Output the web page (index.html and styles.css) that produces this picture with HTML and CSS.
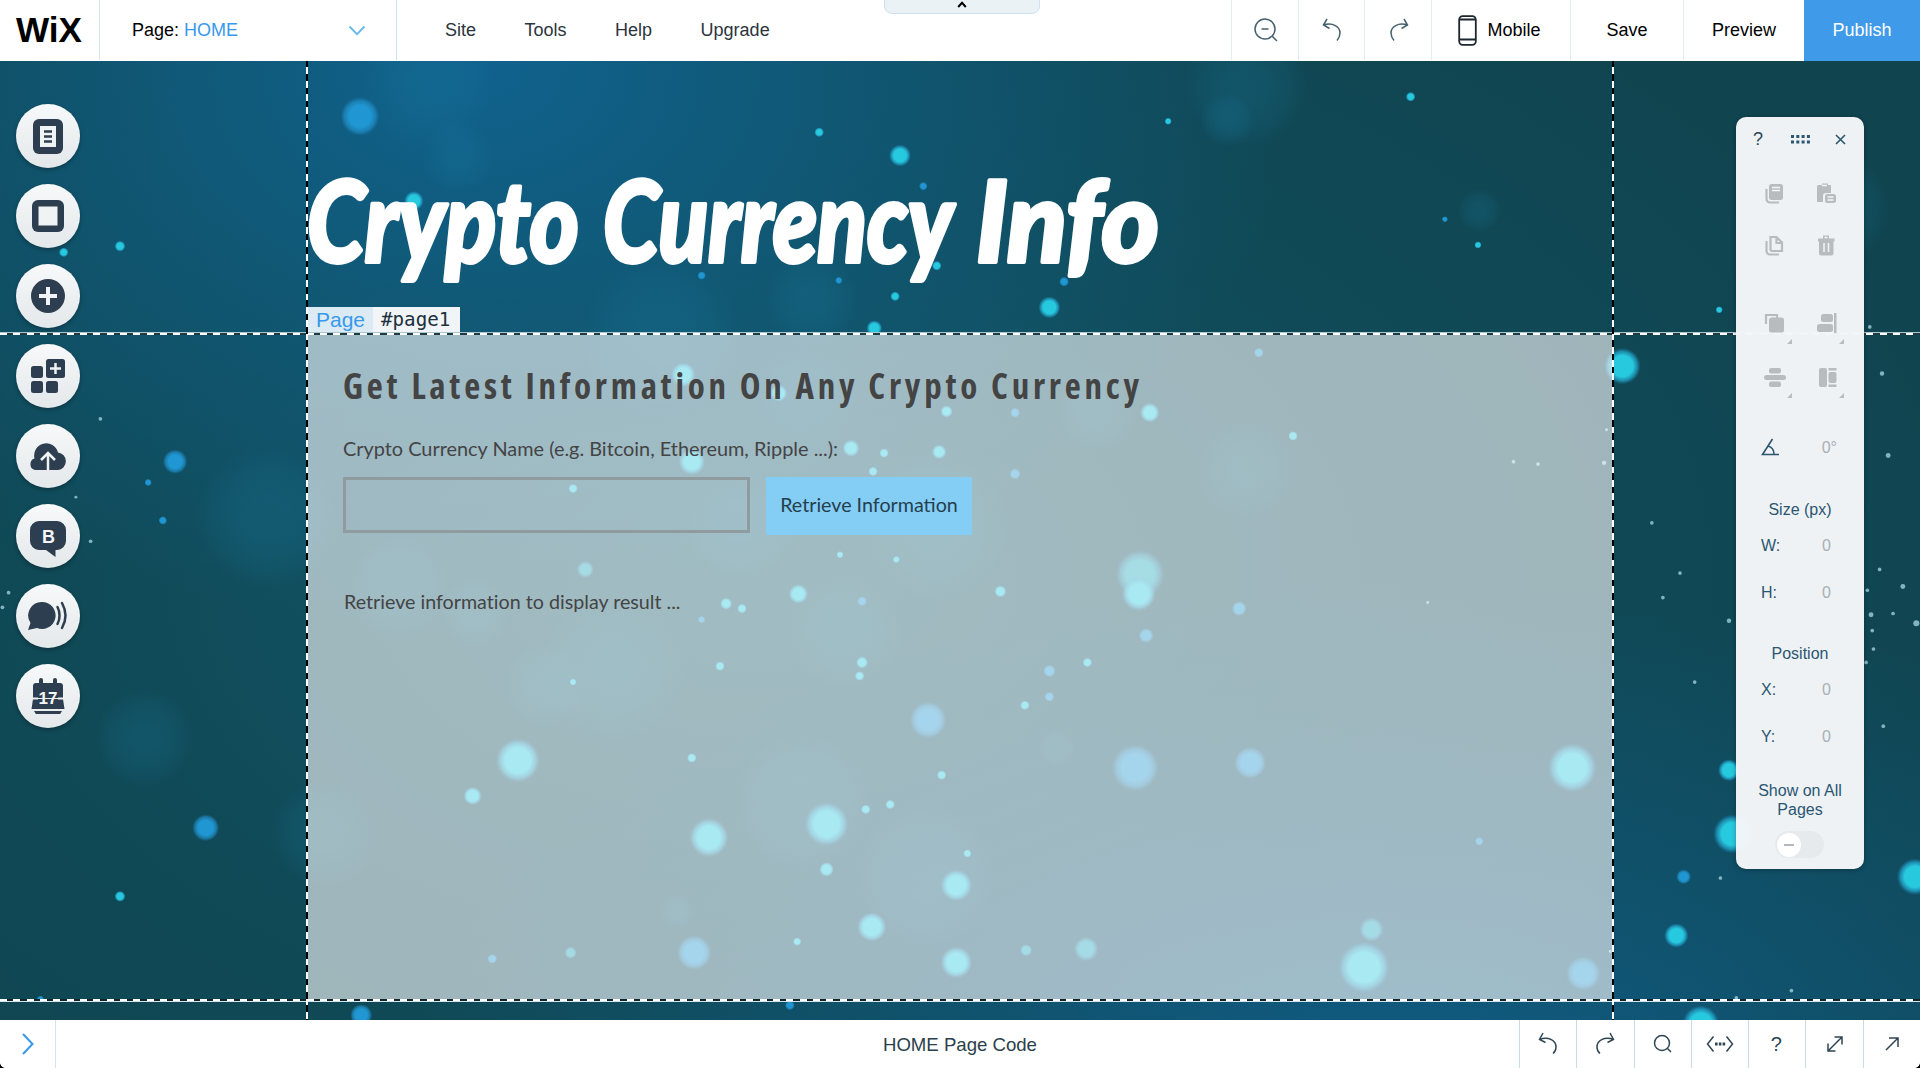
FILE: index.html
```html
<!DOCTYPE html>
<html lang="en">
<head>
<meta charset="utf-8">
<title>HOME Page Editor</title>
<link rel="stylesheet" href="styles.css">
</head>
<body>
<div class="app">
  <header class="topbar">
    <div class="logo"><svg width="68" height="42" viewBox="0 0 68 42"><text class="logo-text" x="1" y="33" textLength="66" lengthAdjust="spacingAndGlyphs">WiX</text></svg></div>
    <div class="page-select"><span class="page-label">Page:&nbsp;</span><span class="page-name">HOME</span>
      <svg class="chev" width="18" height="11" viewBox="0 0 18 11"><path d="M1.5 1.5 9 9.2 16.5 1.5"/></svg></div>
    <nav class="menu"><span>Site</span><span>Tools</span><span>Help</span><span>Upgrade</span></nav>
    <div class="handle"><svg width="10" height="7" viewBox="0 0 10 7"><path d="M1.2 6 5 1.8 8.8 6"/></svg></div>
    <div class="tool t-icon"><svg class="ln" width="26" height="26" viewBox="0 0 26 26"><circle cx="12" cy="12" r="10"/><path d="M8.5 12h7M19 19l5 5"/></svg></div>
    <div class="tool t-icon"><svg class="ln" width="20" height="24" viewBox="0 0 20 24"><path d="M5 1 1.500 7l6 3.500M1.500 7C11 4 18 9 18 15c0 3-1 5-3 7.500"/></svg></div>
    <div class="tool t-icon"><svg class="ln" width="20" height="24" viewBox="0 0 20 24"><path d="M15 1l3.500 6-6 3.500M18.500 7C9 4 2 9 2 15c0 3 1 5 3 7.500"/></svg></div>
    <div class="tool t-mobile"><svg class="phone" width="19" height="31" viewBox="0 0 19 31"><rect x="1.200" y="1.200" width="16.600" height="28.600" rx="3.500"/><path d="M1 4.500h17M1 24.500h17"/></svg><span>Mobile</span></div>
    <div class="tool t-save">Save</div>
    <div class="tool t-preview">Preview</div>
    <div class="tool publish">Publish</div>
  </header>

  <main class="stage">
    <svg class="bokeh" viewBox="0 49.8 1568 783.2" preserveAspectRatio="none">
      <defs>
        <radialGradient id="cy"><stop offset=".58" stop-color="#27c9de"/><stop offset=".8" stop-color="#22a9cf" stop-opacity=".7"/><stop offset="1" stop-color="#1a83b5" stop-opacity="0"/></radialGradient>
        <radialGradient id="bl"><stop offset=".55" stop-color="#2097d3"/><stop offset=".8" stop-color="#1f8dc6" stop-opacity=".7"/><stop offset="1" stop-color="#1a7bb0" stop-opacity="0"/></radialGradient>
        <radialGradient id="hz"><stop offset=".3" stop-color="#1a80a6" stop-opacity=".2"/><stop offset=".7" stop-color="#1a7a9f" stop-opacity=".13"/><stop offset="1" stop-color="#1a7a9f" stop-opacity="0"/></radialGradient>
      </defs>
      <g fill="url(#hz)">
        <circle cx="350" cy="68" r="54"/><circle cx="374" cy="128" r="30"/><circle cx="1002" cy="98" r="22"/><circle cx="1018" cy="70" r="50"/>
        <circle cx="540" cy="275" r="66"/><circle cx="662" cy="245" r="38"/><circle cx="218" cy="423" r="58"/><circle cx="118" cy="603" r="40"/>
        <circle cx="265" cy="680" r="44"/><circle cx="325" cy="480" r="42"/><circle cx="500" cy="545" r="60"/><circle cx="445" cy="560" r="34"/>
        <circle cx="605" cy="425" r="46"/><circle cx="690" cy="515" r="46"/><circle cx="655" cy="325" r="42"/><circle cx="1018" cy="383" r="42"/>
        <circle cx="895" cy="335" r="34"/><circle cx="655" cy="655" r="57"/><circle cx="755" cy="715" r="58"/><circle cx="388" cy="500" r="28"/>
        <circle cx="863" cy="611" r="15"/><circle cx="553" cy="744" r="14"/><circle cx="1500" cy="170" r="44"/><circle cx="1208" cy="172" r="18"/><circle cx="765" cy="430" r="60"/>
      </g>
      <g fill="url(#cy)">
        <circle cx="338" cy="164" r="8"/><circle cx="735" cy="127" r="9"/><circle cx="669" cy="108" r="4"/><circle cx="1152" cy="79" r="4"/><circle cx="954" cy="99" r="3"/>
        <circle cx="857" cy="251" r="9"/><circle cx="714" cy="268" r="6.500"/><circle cx="731" cy="242" r="4"/><circle cx="98" cy="201" r="4.500"/><circle cx="52" cy="206" r="4"/>
        <circle cx="765" cy="217" r="4"/><circle cx="1207" cy="200" r="3"/><circle cx="1325" cy="299" r="15"/><circle cx="558" cy="306" r="10"/><circle cx="636" cy="321" r="7"/>
        <circle cx="939" cy="337" r="8"/><circle cx="1056" cy="356" r="4"/><circle cx="565" cy="377" r="11"/><circle cx="695" cy="366" r="7"/><circle cx="722" cy="370" r="4"/>
        <circle cx="767" cy="369" r="6"/><circle cx="713" cy="385" r="4"/><circle cx="773" cy="336" r="5"/><circle cx="468" cy="399" r="4"/>
        <circle cx="931" cy="469" r="20" opacity=".75"/><circle cx="930" cy="485" r="14"/><circle cx="478" cy="465" r="7" opacity=".7"/><circle cx="652" cy="485" r="8"/><circle cx="817" cy="483" r="5"/>
        <circle cx="593" cy="493" r="5"/><circle cx="606" cy="497" r="4"/><circle cx="704" cy="541" r="5"/><circle cx="588" cy="544" r="4"/><circle cx="888" cy="541" r="4"/><circle cx="837" cy="576" r="4"/>
        <circle cx="423" cy="621" r="18"/><circle cx="386" cy="650" r="7.500"/><circle cx="579" cy="684" r="16"/><circle cx="675" cy="673" r="18"/><circle cx="675" cy="710" r="6"/>
        <circle cx="781" cy="723" r="13"/><circle cx="712" cy="757" r="12"/><circle cx="781" cy="786" r="13"/><circle cx="1284" cy="627" r="20"/><circle cx="1114" cy="790" r="21"/>
        <circle cx="1120" cy="759" r="10" opacity=".7"/><circle cx="887" cy="775" r="10" opacity=".7"/><circle cx="769" cy="633" r="4"/><circle cx="727" cy="657" r="4"/><circle cx="707" cy="661" r="4"/><circle cx="565" cy="619" r="4"/>
        <circle cx="790" cy="697" r="3.500"/><circle cx="651" cy="769" r="3.500"/><circle cx="466" cy="778" r="5" opacity=".7"/><circle cx="838" cy="776" r="5" opacity=".7"/>
        <circle cx="98" cy="732" r="4.500"/><circle cx="1369" cy="764" r="10"/><circle cx="1412" cy="629" r="9"/><circle cx="1415" cy="681" r="16"/><circle cx="1564" cy="716" r="15"/><circle cx="1389" cy="836" r="15"/>
        <circle cx="1404" cy="253" r="3"/><circle cx="468" cy="557" r="3"/><circle cx="702" cy="552" r="4"/><circle cx="686" cy="453" r="3"/><circle cx="732" cy="457" r="3"/>
      </g>
      <g fill="url(#bl)">
        <circle cx="294" cy="95" r="16"/><circle cx="143" cy="377" r="10"/><circle cx="168" cy="676" r="11"/><circle cx="295" cy="829" r="9"/><circle cx="645" cy="821" r="4"/><circle cx="1375" cy="716" r="6"/>
        <circle cx="758" cy="588" r="15"/><circle cx="927" cy="627" r="19"/><circle cx="1021" cy="623" r="13"/><circle cx="567" cy="778" r="14"/><circle cx="1293" cy="795" r="14"/><circle cx="936" cy="519" r="6"/>
        <circle cx="1012" cy="497" r="6"/><circle cx="857" cy="548" r="5"/><circle cx="857" cy="569" r="4"/><circle cx="829" cy="387" r="4.500"/><circle cx="704" cy="491" r="4"/><circle cx="402" cy="783" r="4"/>
        <circle cx="754" cy="152" r="3.500"/><circle cx="869" cy="230" r="4"/><circle cx="573" cy="225" r="3.500"/><circle cx="685" cy="229" r="3"/><circle cx="133" cy="425" r="3.500"/><circle cx="121" cy="394" r="3"/>
        <circle cx="1028" cy="288" r="4"/><circle cx="1180" cy="179" r="2.500"/><circle cx="829" cy="337" r="4"/><circle cx="1208" cy="687" r="3.500"/><circle cx="33" cy="816" r="3"/><circle cx="573" cy="506" r="3"/>
      </g>
      <g class="stars">
        <circle cx="1528" cy="502" r="2"/><circle cx="1554" cy="479" r="2"/><circle cx="1565" cy="509" r="2.500"/><circle cx="1546" cy="501" r="1.500"/><circle cx="1525" cy="482" r="1.500"/><circle cx="1535" cy="465" r="1.500"/><circle cx="1530" cy="530" r="1.500"/><circle cx="1524" cy="541" r="1.500"/>
        <circle cx="1542" cy="372" r="2"/><circle cx="1537" cy="305" r="1.800"/><circle cx="1527" cy="267" r="1.500"/><circle cx="1529" cy="515" r="1.500"/><circle cx="1349" cy="427" r="1.500"/><circle cx="1372" cy="468" r="1.500"/><circle cx="1384" cy="557" r="1.500"/>
        <circle cx="1358" cy="488" r="1.500"/><circle cx="1412" cy="507" r="1.800"/><circle cx="1236" cy="377" r="1.500"/><circle cx="1256" cy="379" r="1.500"/><circle cx="1310" cy="378" r="1.800"/><circle cx="1166" cy="492" r="1.200"/><circle cx="1315" cy="777" r="1.200"/><circle cx="1312" cy="351" r="1.200"/>
        <circle cx="82" cy="342" r="1.500"/><circle cx="74" cy="442" r="1.500"/><circle cx="62" cy="406" r="1.200"/><circle cx="7" cy="484" r="1.500"/><circle cx="2" cy="496" r="1.500"/><circle cx="1463" cy="809" r="1.500"/><circle cx="1418" cy="815" r="1.500"/><circle cx="1405" cy="717" r="1.500"/><circle cx="1538" cy="593" r="1.500"/>
      </g>
    </svg>

    <div class="site">
      <section class="site-head">
        <h1 class="title"><svg width="880" height="160" viewBox="0 0 880 160">
          <text x="0" y="122" textLength="272" lengthAdjust="spacingAndGlyphs">Crypto</text>
          <text x="296" y="122" textLength="350" lengthAdjust="spacingAndGlyphs">Currency</text>
          <text x="669" y="122" textLength="183" lengthAdjust="spacingAndGlyphs">Info</text></svg></h1>
        <div class="tag"><span class="tag-kind">Page</span><span class="tag-id">#page1</span></div>
      </section>
      <section class="content">
        <h2><svg width="810" height="50" viewBox="0 0 810 50"><text class="h2-text" x="0" y="36" textLength="796">Get Latest Information On Any Crypto Currency</text></svg></h2>
        <p class="label">Crypto Currency Name (e.g. Bitcoin, Ethereum, Ripple ...):</p>
        <div class="form"><input class="field" type="text"><button class="btn">Retrieve Information</button></div>
        <p class="result">Retrieve information to display result ...</p>
      </section>
    </div>

    <i class="guide-h g-top"></i><i class="guide-h g-bottom"></i>
    <i class="guide-v g-left"></i><i class="guide-v g-right"></i>

    <aside class="rail">
      <div class="round"><svg width="30" height="35" viewBox="0 0 30 35"><rect width="30" height="35" rx="6"/><path class="cut" d="M7 7h16v21H7z"/><path class="bar" d="M11 12.500h8M11 17.500h8M11 22.500h8"/></svg></div>
      <div class="round"><svg width="32" height="32" viewBox="0 0 32 32"><rect width="32" height="32" rx="6"/><path class="cut" d="M6.500 6.500h19v19h-19z"/></svg></div>
      <div class="round"><svg width="34" height="34" viewBox="0 0 34 34"><circle cx="17" cy="17" r="17"/><path class="wl" d="M17 8v18M8 17h18"/></svg></div>
      <div class="round"><svg width="34" height="34" viewBox="0 0 34 34"><rect y="7" width="12" height="12" rx="2.500"/><rect y="22" width="12" height="12" rx="2.500"/><rect x="15" y="22" width="12" height="12" rx="2.500"/><rect x="15" width="19" height="19" rx="2.500"/><path class="wl thin" d="M24.500 4v11M19 9.500h11"/></svg></div>
      <div class="round"><svg width="38" height="28" viewBox="0 0 38 28"><path d="M6 28a6 6 0 0 1-.5-11.500 12 12 0 0 1 23.500-6A8.800 8.800 0 0 1 29 28z"/><path class="wl thin" d="M19 28V12M12 18l7-7 7 7"/></svg></div>
      <div class="round low"><svg width="36" height="36" viewBox="0 0 36 36"><path d="M9 0h18a9 9 0 0 1 9 9v11a9 9 0 0 1-9 9h-1.500v7L16 29H9a9 9 0 0 1-9-9V9a9 9 0 0 1 9-9z"/><text class="b" x="18.500" y="21.500">B</text></svg></div>
      <div class="round"><svg width="40" height="30" viewBox="0 0 40 30"><path d="M14 1a13.500 13.500 0 1 1-5 26L0 29l2.500-7A13.500 13.500 0 0 1 14 1z"/><path class="wave" d="M29.500 6c2.700 5 2.700 12 0 17M34 2c4.500 8 4.500 17 0 25"/></svg></div>
      <div class="round"><svg width="34" height="36" viewBox="0 0 34 36"><path d="M5 5h24a3 3 0 0 1 3 3v12H2V8a3 3 0 0 1 3-3zM2 21h30l1.500 10H.5zM3 33h28l-2 3.200H5z"/><path class="ring" d="M10 2v4M24 2v4"/><path class="split" d="M0 20.500h7M27 20.500h7"/><text class="num" x="17" y="26">17</text></svg></div>
    </aside>

    <aside class="panel">
      <div class="p-head"><span class="q">?</span><svg class="grip" width="20" height="9" viewBox="0 0 20 9"><path class="dots" d="M0 1.500h19M0 7h19"/></svg><svg class="pl" width="11" height="11" viewBox="0 0 11 11"><path d="M1 1l9 9M10 1 1 10"/></svg></div>
      <div class="p-grid">
        <svg width="24" height="24" viewBox="0 0 24 24"><rect x="6" y="2" width="14" height="16" rx="2.500"/><path class="ol" d="M3.500 7v10a3.500 3.500 0 0 0 3.500 3.500h9"/><path class="pw" d="M9 5.500h8M9 8.500h8"/></svg>
        <svg width="24" height="24" viewBox="0 0 24 24"><path d="M4 3h4V1.500h6V3h3v8h-5a3 3 0 0 0-3 3v6H3V4z"/><path class="pw" d="M8 3.500h5"/><rect x="11" y="12" width="11" height="9" rx="2.500"/><path class="pw" d="M13.500 15h6M13.500 18h6"/></svg>
        <svg width="24" height="24" viewBox="0 0 24 24"><path class="ol" d="M7.500 3h6L19 8.500V17H9.500a2 2 0 0 1-2-2zM13.500 3v6H19M3.500 7v10a3.500 3.500 0 0 0 3.500 3.500h9"/></svg>
        <svg width="24" height="24" viewBox="0 0 24 24"><path d="M4 4.500h5v-3h6v3h5.500v3H4zM5 7h14.500v12a2.500 2.500 0 0 1-2.500 2.500H7.500A2.500 2.500 0 0 1 5 19z"/><path class="pw" d="M10 9v9M14.500 9v9M10.500 3.500h3"/></svg>
      </div>
      <div class="p-grid second">
        <svg width="34" height="34" viewBox="0 0 34 34"><path class="ol" d="M6 12V3h11v3"/><rect x="9" y="5.500" width="15" height="15" rx="2.500"/><path d="M32 27v5h-5z"/></svg>
        <svg width="34" height="34" viewBox="0 0 34 34"><rect x="9" y="2" width="12" height="8" rx="2.500"/><rect x="5" y="12" width="16" height="8" rx="2.500"/><path d="M22 1h2.500v20H22zM32 27v5h-5z"/></svg>
        <svg width="34" height="34" viewBox="0 0 34 34"><rect x="9" y="2" width="12" height="5.500" rx="2"/><rect x="4" y="9" width="22" height="5" rx="2.500"/><rect x="9" y="15.500" width="12" height="5.500" rx="2"/><path d="M32 27v5h-5z"/></svg>
        <svg width="34" height="34" viewBox="0 0 34 34"><rect x="7" y="2" width="8" height="19" rx="2"/><rect x="16.500" y="6" width="8" height="11" rx="2"/><path d="M16.500 2H24.500v2.500h-8zM16.500 18.500h8V21h-8zM32 27v5h-5z"/></svg>
      </div>
      <div class="p-row angle"><svg class="pl" width="19" height="18" viewBox="0 0 19 18"><path d="M11.500 1 1.500 16.500H18M7 8c4 1 6 4 6 8.500"/></svg><span class="deg">0°</span></div>
      <h3 class="p-title">Size (px)</h3>
      <div class="p-row"><b>W:</b><span>0</span></div>
      <div class="p-row"><b>H:</b><span>0</span></div>
      <h3 class="p-title pos">Position</h3>
      <div class="p-row"><b>X:</b><span>0</span></div>
      <div class="p-row"><b>Y:</b><span>0</span></div>
      <p class="p-show">Show on All<br>Pages</p>
      <div class="toggle"><i></i></div>
    </aside>
  </main>

  <footer class="bottombar">
    <div class="expand"><svg width="14" height="24" viewBox="0 0 14 24"><path d="M2 2l9.500 10L2 22"/></svg></div>
    <div class="code-title">HOME Page Code</div>
    <div class="b-tool"><svg class="ln" width="20" height="24" viewBox="0 0 20 24"><path d="M5 1 1.500 7.500l6 3M1.500 7.500C11 4 18 9 18 15c0 3-1 5-3 6.500"/></svg></div>
    <div class="b-tool"><svg class="ln" width="20" height="24" viewBox="0 0 20 24"><path d="M15 1l3.500 6.500-6 3M18.500 7.500C9 4 2 9 2 15c0 3 1 5 3 6.500"/></svg></div>
    <div class="b-tool"><svg class="ln" width="20" height="20" viewBox="0 0 20 20"><circle cx="9" cy="9" r="7.500"/><path d="M14.500 14.500 18 18"/></svg></div>
    <div class="b-tool"><svg class="ln" width="28" height="18" viewBox="0 0 28 18"><path d="M7.500 1.500 1.500 9l6 7.500M20.500 1.500l6 7.500-6 7.500"/><path class="dot3" d="M9 9h10.500"/></svg></div>
    <div class="b-tool q">?</div>
    <div class="b-tool"><svg class="ln" width="18" height="18" viewBox="0 0 18 18"><path d="M2 16 16 2M8.500 2H16v7.500M2 8.500V16h7.500"/></svg></div>
    <div class="b-tool"><svg class="ln" width="16" height="16" viewBox="0 0 16 16"><path d="M2 14 14 2M5 2h9v9"/></svg></div>
    <i class="corner c-left"></i><i class="corner c-right"></i>
  </footer>
</div>
</body>
</html>
```
FILE: styles.css
```css
* { box-sizing: border-box; margin: 0; padding: 0; }
body { font-family: "Liberation Sans", sans-serif; overflow: hidden; }
svg { display: block; flex: none; }
.app { width: 1920px; height: 1068px; display: flex; flex-direction: column; }

/* top bar */
.topbar { position: relative; height: 61px; flex: none; display: flex; align-items: stretch; background: #fff; font-size: 18px; line-height: 21px; color: #16222d; padding-bottom: 1px; }
.topbar > div, .topbar > nav { display: flex; align-items: center; }
.logo { width: 100px; padding-left: 15px; border-right: 1px solid #d4e6f0; }
.logo-text { font-weight: 700; font-size: 35px; fill: #000; }
.page-select { width: 297px; padding: 0 30px 0 32px; border-right: 1px solid #c9e2ee; }
.page-label { color: #000; }
.page-name { color: #3899ec; }
.chev { margin-left: auto; fill: none; stroke: #65b8ee; stroke-width: 1.8px; }
.menu { flex: 1; padding-left: 48px; gap: 48.500px; color: #2b343c; }
.topbar > .handle { position: absolute; left: 884px; top: -2px; width: 156px; height: 16px; background: #eaf2f6; border: 1px solid #cfe1ee; border-radius: 0 0 8px 8px; justify-content: center; padding-bottom: 3px; }
.handle path { fill: none; stroke: #000; stroke-width: 2px; }
.tool { border-left: 1px solid #e3eef3; justify-content: center; color: #000; }
.t-icon { width: 66.700px; padding-left: 2px; }
.t-mobile { width: 139px; gap: 10px; padding-right: 3px; }
.t-save { width: 113px; }
.t-preview { width: 121px; }
.topbar > .publish { width: 116px; background: #3f9bea; color: #fff; border: 0; margin-bottom: -1px; }
.ln { fill: none; stroke: #45606e; stroke-width: 1.500px; }
.phone { fill: none; stroke: #1c2730; stroke-width: 1.800px; }

/* canvas */
.stage { position: relative; height: 959px; flex: none; overflow: hidden;
  background:
    radial-gradient(ellipse 820px 560px at 480px 10px, #10628e 0%, rgba(16,94,130,.72) 40%, rgba(16,80,105,0) 100%),
    radial-gradient(ellipse 1000px 520px at 1400px 1040px, #105c86 0%, rgba(16,88,122,.65) 45%, rgba(16,80,105,0) 100%),
    radial-gradient(ellipse 1300px 800px at 760px 520px, rgba(20,94,112,.75) 0%, rgba(16,84,102,.4) 50%, rgba(16,80,100,0) 100%),
    #10444f; }
.bokeh { position: absolute; inset: 0; width: 1920px; height: 959px; }
.stars { fill: #a9d8e6; opacity: .75; }
.site { position: relative; width: 1306px; margin-left: 307px; }
.site-head { height: 272px; display: flex; flex-direction: column; justify-content: space-between; padding-top: 79px; }
.title { height: 160px; }
.title text { font-family: Lato, sans-serif; font-style: italic; font-weight: 900; font-size: 113px; fill: #fff; stroke: #fff; stroke-width: 4px; stroke-linejoin: round; }
.tag { display: flex; height: 26px; align-items: stretch; line-height: 25px; }
.tag-kind { width: 66px; padding-left: 9px; background: #dceaf3; color: #3899ec; font-size: 21px; }
.tag-id { width: 87px; padding-left: 8px; background: #f1f5f7; color: #20303c; font: 19.200px/26px "DejaVu Sans Mono", monospace; }
.content { height: 667px; background: rgba(255,255,255,.6); padding: 30px 36px 0; color: #444; font-family: Lato, sans-serif; font-variant-ligatures: none; }
.h2-text { font: 700 35px "Open Sans", sans-serif; font-stretch: 75%; fill: #444; }
.label { margin-top: 22px; font-size: 19.900px; line-height: 26px; }
.form { display: flex; gap: 16px; margin-top: 16px; }
.field { width: 407px; height: 56px; border: 3px solid #8f9b9e; background: transparent; }
.btn { width: 206px; height: 58px; border: 0; padding-bottom: 3px; background: #84cdf5; color: #24404e; font: 19.700px Lato, sans-serif; }
.result { margin-top: 54px; padding-left: 1px; font-size: 19.700px; line-height: 26px; }

/* guides */
.guide-h, .guide-v { position: absolute; }
.guide-h { left: 0; right: 0; height: 3px; }
.g-top { top: 271px; background: linear-gradient(#a9c7ce 0 1px, transparent 1px), repeating-linear-gradient(90deg, #fff 0 7px, #203a44 7px 13.330px); }
.g-bottom { top: 938px; background: linear-gradient(transparent 2px, #d3e4ea 2px), repeating-linear-gradient(90deg, #fff 0 7px, #12262e 7px 13.330px); }
.guide-v { top: 0; bottom: 0; width: 2px; background: repeating-linear-gradient(#000 0 6.500px, #fff 6.500px 13.300px); }
.g-left { left: 306px; }
.g-right { left: 1612px; }

/* left rail */
.rail { position: absolute; left: 16px; top: 43px; display: flex; flex-direction: column; gap: 16px; }
.round { width: 64px; height: 64px; border-radius: 50%; background: linear-gradient(#f7f9fa, #e4e8ea); display: flex; align-items: center; justify-content: center; box-shadow: 0 2px 4px rgba(0,0,0,.3); fill: #2d3e50; }
.low { padding-top: 6px; }
.cut { fill: #f0f3f4; }
.bar { stroke: #2d3e50; stroke-width: 2.500px; }
.wl { fill: none; stroke: #f0f3f4; stroke-width: 4px; }
.thin { stroke-width: 2.500px; }
.wave, .ring { fill: none; stroke: #2d3e50; stroke-width: 2.500px; stroke-linecap: round; }
.ring { stroke-width: 4px; }
.split { stroke: #eef1f2; stroke-width: 2px; }
.b, .num { fill: #f4f6f7; font-weight: 700; font-size: 18px; text-anchor: middle; }
.num { font-size: 17px; }

/* floating toolbar */
.panel { position: absolute; left: 1736px; top: 56px; width: 128px; height: 752px; border-radius: 10px; background: rgba(243,246,248,.98); box-shadow: 0 1px 5px rgba(0,0,0,.3); color: #2b5672; font-size: 16px; line-height: 19px; }
.p-head { height: 42px; display: flex; align-items: center; justify-content: space-between; padding: 2px 18px 0 17px; }
.grip { margin-left: 3px; }
.q { color: #2b4657; font-size: 18px; }
.dots { fill: none; stroke: #2b5672; stroke-width: 3px; stroke-dasharray: 3 2.300; }
.pl { fill: none; stroke: #2b5672; stroke-width: 1.600px; }
.p-grid { display: grid; grid-template-columns: 24px 24px; column-gap: 27px; row-gap: 28px; padding: 23px 0 0 27px; fill: #b9bcbf; }
.p-grid.second { grid-template-columns: 34px 34px; column-gap: 18px; row-gap: 20px; padding: 54px 0 0 24px; }
.ol { fill: none; stroke: #b9bcbf; stroke-width: 2.200px; }
.pw { fill: none; stroke: #f3f6f8; stroke-width: 1.500px; }
.p-row { display: flex; justify-content: space-between; align-items: center; height: 47px; padding: 0 33px 0 25px; }
.p-row b { font-weight: 400; }
.p-row span { color: #a9b0b5; }
.p-row.angle { height: 40px; margin-top: 27px; padding-right: 27px; }
.p-title { font-weight: 400; font-size: 16px; text-align: center; margin: 33px 0 3px; }
.p-title.pos { margin-top: 28px; }
.p-show { text-align: center; margin-top: 21px; }
.toggle { width: 49px; height: 27px; margin: 12px 0 0 39px; border-radius: 14px; background: #e6eaec; padding: 1.500px; }
.toggle i { display: flex; align-items: center; justify-content: center; width: 24px; height: 24px; border-radius: 50%; background: #fff; }
.toggle i::before { content: ""; width: 10px; height: 2px; background: #b0babf; }

/* bottom bar */
.bottombar { position: relative; height: 48px; display: flex; background: #fff; color: #2b3f4c; }
.expand { width: 56px; display: flex; align-items: center; justify-content: center; border-right: 1px solid #d5e5ef; }
.expand path { fill: none; stroke: #3899ec; stroke-width: 2px; }
.code-title { flex: 1; padding-left: 345px; text-align: center; font-size: 18.600px; line-height: 49px; }
.b-tool { width: 57.300px; display: flex; align-items: center; justify-content: center; border-left: 1px solid #c8dae4; }
.b-tool .ln { stroke: #2f4653; }
.b-tool.q { font-size: 20px; padding-right: 2px; }
.dot3 { stroke-width: 2.800px; stroke-dasharray: 2.600 1.200; }
.corner { position: absolute; bottom: 0; width: 5px; height: 5px; }
.c-left { left: 0; background: radial-gradient(circle at 100% 0, transparent 4.500px, #000 5px); }
.c-right { right: 0; background: radial-gradient(circle at 0 0, transparent 4.500px, #000 5px); }
```
